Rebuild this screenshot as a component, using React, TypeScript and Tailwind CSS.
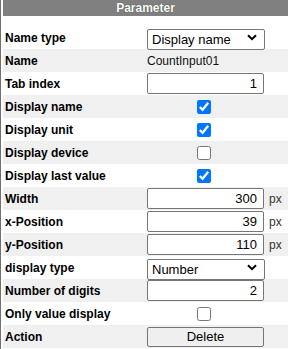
import React from "react";

const font = { fontFamily: '"Liberation Sans", Arial, sans-serif' };

function Row({ label, gray, children, unit }: { label: string; gray?: boolean; children?: React.ReactNode; unit?: boolean }) {
  return (
    <div className={`flex items-center h-[23px] ${gray ? "bg-[#f0f0f0]" : "bg-white"}`}>
      <div className="w-[144px] pl-[2px] text-[12px] font-bold text-black leading-none">{label}</div>
      <div className="w-[118px] flex items-center">{children}</div>
      {unit && <div className="ml-[4px] text-[12px] text-[#333] leading-none">px</div>}
    </div>
  );
}

function Chevron() {
  return (
    <svg className="absolute right-[8px] top-[7px] pointer-events-none" width="10" height="7" viewBox="0 0 10 7">
      <path d="M1 1.2 L5 5.2 L9 1.2" fill="none" stroke="#000" strokeWidth="2" />
    </svg>
  );
}

function Select({ value }: { value: string }) {
  return (
    <div className="relative w-[118px] h-[21px]">
      <select
        defaultValue={value}
        className="appearance-none w-full h-full border border-[#767676] rounded-[2px] bg-white pl-[4px] text-[13px] text-black outline-none"
        style={font}
      >
        <option>{value}</option>
      </select>
      <Chevron />
    </div>
  );
}

function TextInput({ value }: { value: string }) {
  return (
    <input
      type="text"
      defaultValue={value}
      className="w-[117px] h-[21px] border border-[#767676] rounded-[2px] bg-white text-right pr-[6px] text-[13px] text-black outline-none"
      style={font}
    />
  );
}

function Check({ checked }: { checked?: boolean }) {
  return (
    <input
      type="checkbox"
      defaultChecked={checked}
      className="m-0 ml-[50px] w-[14px] h-[14px] accent-[#0075ff]"
    />
  );
}

export default function App() {
  return (
    <div className="w-[288px] h-[349px] overflow-hidden bg-white border-l border-[#707070] pl-[2px]" style={font}>
      <div className="h-[16px] bg-[#808080] flex items-center justify-center text-white font-bold text-[12px] leading-none [text-shadow:0_0_1px_#333]">
        Parameter
      </div>
      <div className="h-[10px]" />
      <Row label="Name type">
        <Select value="Display name" />
      </Row>
      <Row label="Name" gray>
        <span className="text-[12px] text-[#111] leading-none">CountInput01</span>
      </Row>
      <Row label="Tab index">
        <TextInput value="1" />
      </Row>
      <Row label="Display name" gray>
        <Check checked />
      </Row>
      <Row label="Display unit">
        <Check checked />
      </Row>
      <Row label="Display device" gray>
        <Check />
      </Row>
      <Row label="Display last value">
        <Check checked />
      </Row>
      <Row label="Width" gray unit>
        <TextInput value="300" />
      </Row>
      <Row label="x-Position" unit>
        <TextInput value="39" />
      </Row>
      <Row label="y-Position" gray unit>
        <TextInput value="110" />
      </Row>
      <Row label="display type">
        <Select value="Number" />
      </Row>
      <Row label="Number of digits" gray>
        <TextInput value="2" />
      </Row>
      <Row label="Only value display">
        <Check />
      </Row>
      <Row label="Action" gray>
        <button
          className="w-[117px] h-[20px] bg-[#efefef] border border-[#767676] rounded-[2px] text-[13px] text-black leading-none"
          style={font}
        >
          Delete
        </button>
      </Row>
    </div>
  );
}
